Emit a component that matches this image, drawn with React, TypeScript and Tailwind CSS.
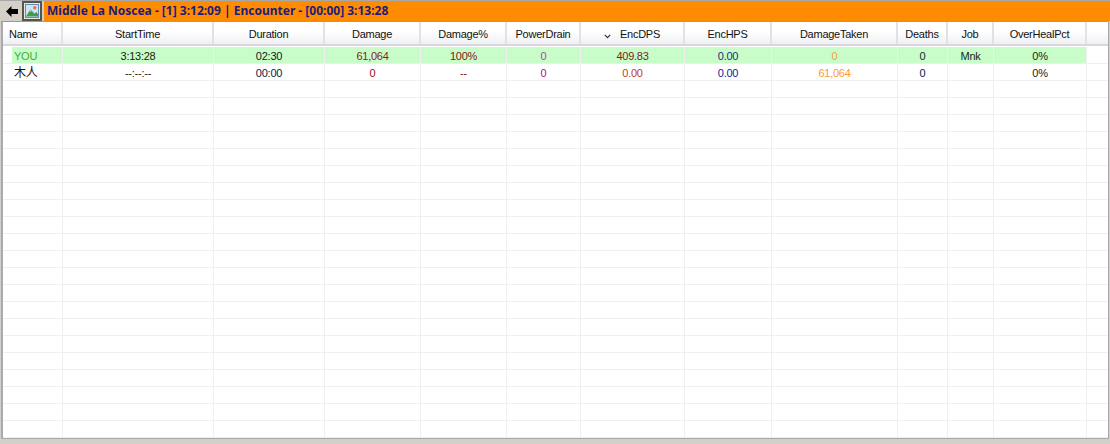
import React from "react";

const columns = [
  { name: "Name", width: 60, align: "left" },
  { name: "StartTime", width: 151 },
  { name: "Duration", width: 111 },
  { name: "Damage", width: 96 },
  { name: "Damage%", width: 86 },
  { name: "PowerDrain", width: 74 },
  { name: "EncDPS", width: 104 },
  { name: "EncHPS", width: 87 },
  { name: "DamageTaken", width: 126 },
  { name: "Deaths", width: 50 },
  { name: "Job", width: 46 },
  { name: "OverHealPct", width: 93 },
];

const rows: { text: string; color: string }[][] = [
  [
    { text: "YOU", color: "text-[#3fae3f]" },
    { text: "3:13:28", color: "text-[#14240c]" },
    { text: "02:30", color: "text-[#082430]" },
    { text: "61,064", color: "text-[#8a1c1c]" },
    { text: "100%", color: "text-[#861414]" },
    { text: "0", color: "text-[#a050a0]" },
    { text: "409.83", color: "text-[#7a1c1c]" },
    { text: "0.00", color: "text-[#14307c]" },
    { text: "0", color: "text-[#f0a050]" },
    { text: "0", color: "text-[#082430]" },
    { text: "Mnk", color: "text-[#142818]" },
    { text: "0%", color: "text-[#142818]" },
  ],
  [
    { text: "木人", color: "text-[#111111]" },
    { text: "--:--:--", color: "text-[#222222]" },
    { text: "00:00", color: "text-[#06224a]" },
    { text: "0", color: "text-[#a01010]" },
    { text: "--", color: "text-[#8a1010]" },
    { text: "0", color: "text-[#b01090]" },
    { text: "0.00", color: "text-[#c03c20]" },
    { text: "0.00", color: "text-[#1020a0]" },
    { text: "61,064", color: "text-[#ff9a2c]" },
    { text: "0", color: "text-[#06224a]" },
    { text: "", color: "" },
    { text: "0%", color: "text-[#222222]" },
  ],
];

const emptyRows = Array.from({ length: 21 }, (_, i) => i);

function Cell({ w, className, children }: { w: number; className?: string; children?: React.ReactNode }) {
  return (
    <div style={{ width: w }} className={`h-full shrink-0 border-r border-[#efefef] text-center leading-[18px] ${className ?? ""}`}>
      {children}
    </div>
  );
}

export default function App() {
  return (
    <div className="flex h-[444px] w-[1110px] flex-col overflow-hidden bg-[#d4d0c8] font-['Liberation_Sans',Arial,'Noto_Sans_CJK_SC',sans-serif] text-[11px] tracking-[-0.25px]">
      <div className="h-px shrink-0 bg-[#a8a8a8]" />
      <div className="flex h-[20px] shrink-0 items-stretch">
        <div className="flex w-[22px] items-center justify-center pl-[2px]">
          <svg width="12" height="11" viewBox="0 0 12 11">
            <path d="M5.5 0 L0 5.5 L5.5 11 L5.5 8 L12 8 L12 3 L5.5 3 Z" fill="#000" />
          </svg>
        </div>
        <div className="flex w-[20px] items-center justify-center border-2 border-[#57544c] bg-[#e8e6df]">
          <svg width="14" height="14" viewBox="0 0 15 15">
            <rect x="0.5" y="0.5" width="14" height="14" fill="#cfe3f6" stroke="#5a86b8" />
            <circle cx="10.5" cy="4" r="1.8" fill="#e8703c" />
            <path d="M1 13.5 L6 5.5 L10 10.5 L12 8.5 L14 11 L14 13.5 Z" fill="#3f9a4c" />
            <path d="M6 5.5 L7.5 7.5 L5 8.5 Z" fill="#b9e0a8" />
          </svg>
        </div>
        <div className="ml-[2px] flex flex-1 items-center bg-[#ff8c00] pl-[3px] font-['Noto_Sans',sans-serif] text-[12px] font-bold tracking-normal whitespace-pre text-[#1c1c80]">
          Middle La Noscea - [1] 3:12:09 | Encounter - [00:00] 3:13:28
        </div>
      </div>
      <div className="mx-[1px] flex h-[418px] shrink-0 flex-col overflow-hidden border-2 border-t border-r border-b border-[#a9a9b0] border-t-[#9a9a9a] bg-white">
        <div className="flex h-[24px] shrink-0 border-b-2 border-[#d8d8dc] bg-gradient-to-b from-white from-40% to-[#eff0f3] text-[#111111]">
          {columns.map((c) => (
            <div
              key={c.name}
              style={{ width: c.width }}
              className={`relative flex h-full shrink-0 items-center border-r-2 border-[#e1e2e6] pt-[2px] ${c.align === "left" ? "pl-[6px]" : "justify-center"} ${c.name === "EncDPS" ? "pl-[16px]" : ""}`}
            >
              {c.name === "EncDPS" && (
                <svg className="absolute top-[12px] left-[23px]" width="7" height="5" viewBox="0 0 7 5">
                  <path d="M0.8 0.8 L3.5 3.6 L6.2 0.8" fill="none" stroke="#333" strokeWidth="1.2" />
                </svg>
              )}
              {c.name}
            </div>
          ))}
        </div>
        <div className="flex flex-1 flex-col overflow-hidden pt-px">
          {rows.map((row, i) => (
            <div key={i} className="flex h-[17px] shrink-0 border-b border-[#efefef]">
              {row.map((cell, j) => (
                <Cell
                  key={j}
                  w={columns[j].width}
                  className={`${i === 0 ? "border-[#e6f6e6] bg-[#c8fcc8]" : ""} ${cell.color} ${j === 0 ? (i === 0 ? "ml-[9px] !w-[51px] pl-[2px] text-left" : "pl-[11px] text-left text-[12px]") : ""}`}
                >
                  {cell.text}
                </Cell>
              ))}
            </div>
          ))}
          {emptyRows.map((i) => (
            <div key={i} className="flex h-[17px] shrink-0 border-b border-[#efefef]">
              {columns.map((c) => (
                <Cell key={c.name} w={c.width} />
              ))}
            </div>
          ))}
        </div>
      </div>
    </div>
  );
}
